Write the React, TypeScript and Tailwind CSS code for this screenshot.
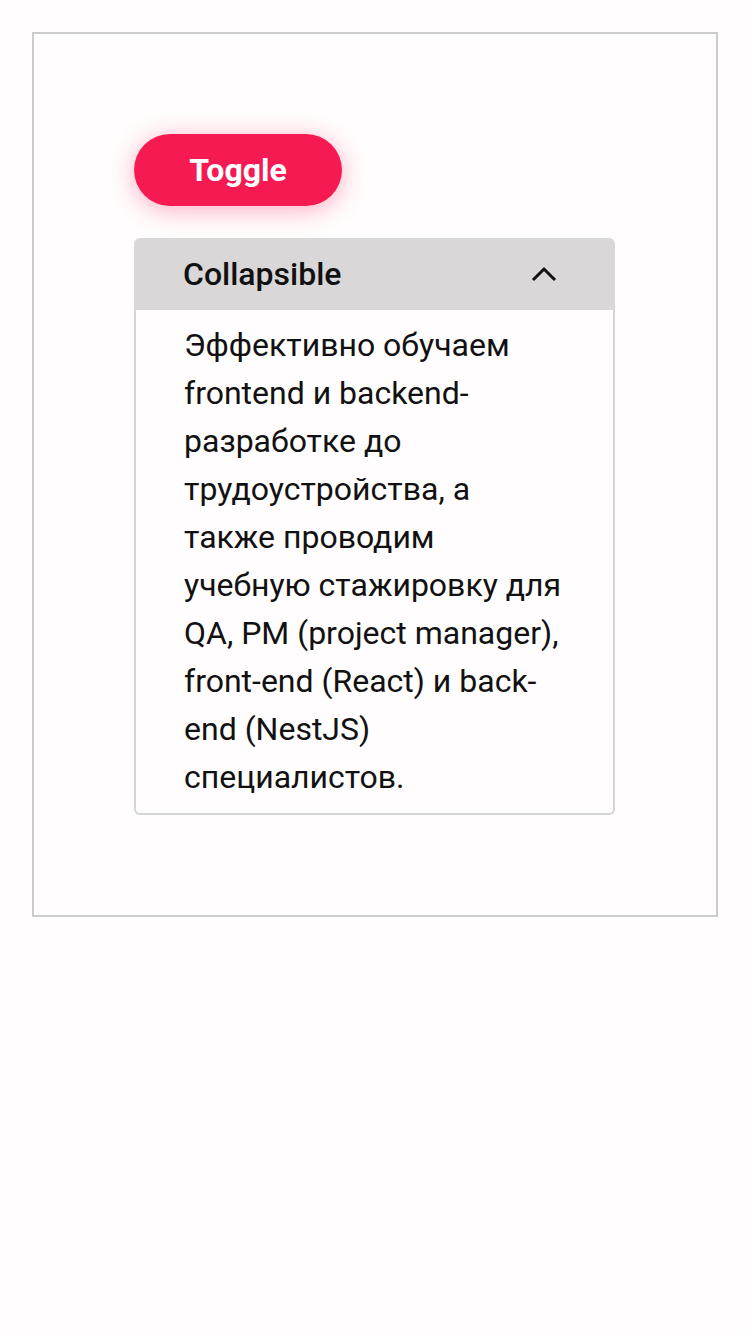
import { useState } from "react"

const text =
  "Эффективно обучаем frontend и backend-разработке до трудоустройства, а также проводим учебную стажировку для QA, PM (project manager), front-end (React) и back-end (NestJS) специалистов."

export default function App() {
  const [open, setOpen] = useState(true)

  return (
    <div className="min-h-[1334px] bg-[#fffdfd] p-8 font-['Roboto',sans-serif]">
      <div className="border-2 border-[#cccccc] p-[100px]">
        {/* кнопка */}
        <button
          onClick={() => setOpen((v) => !v)}
          className="h-[72px] w-[208px] rounded-full bg-[#f61a53] text-[32px] font-bold text-white shadow-[0_4px_24px_rgba(246,26,83,0.35)]"
        >
          Toggle
        </button>

        {/* коллапс */}
        <div className="mt-8 w-[481px]">
          <div className="flex h-[72px] items-center justify-between rounded-t-md bg-[#d9d7d8] pl-[49px] pr-[58px]">
            <span className="text-[32px] font-medium text-[#111]">Collapsible</span>
            <svg
              width="26"
              height="16"
              viewBox="0 0 26 16"
              fill="none"
              stroke="#111"
              strokeWidth="3"
              className={open ? "" : "rotate-180"}
            >
              <path d="M2 14 L13 3 L24 14" />
            </svg>
          </div>
          {open && (
            <div className="rounded-b-md border-2 border-t-0 border-[#d5d5d5] px-[48px] pt-[11px] pb-[12px]">
              <p className="text-[32px] leading-[48px] text-[#111]">{text}</p>
            </div>
          )}
        </div>
      </div>
    </div>
  )
}
